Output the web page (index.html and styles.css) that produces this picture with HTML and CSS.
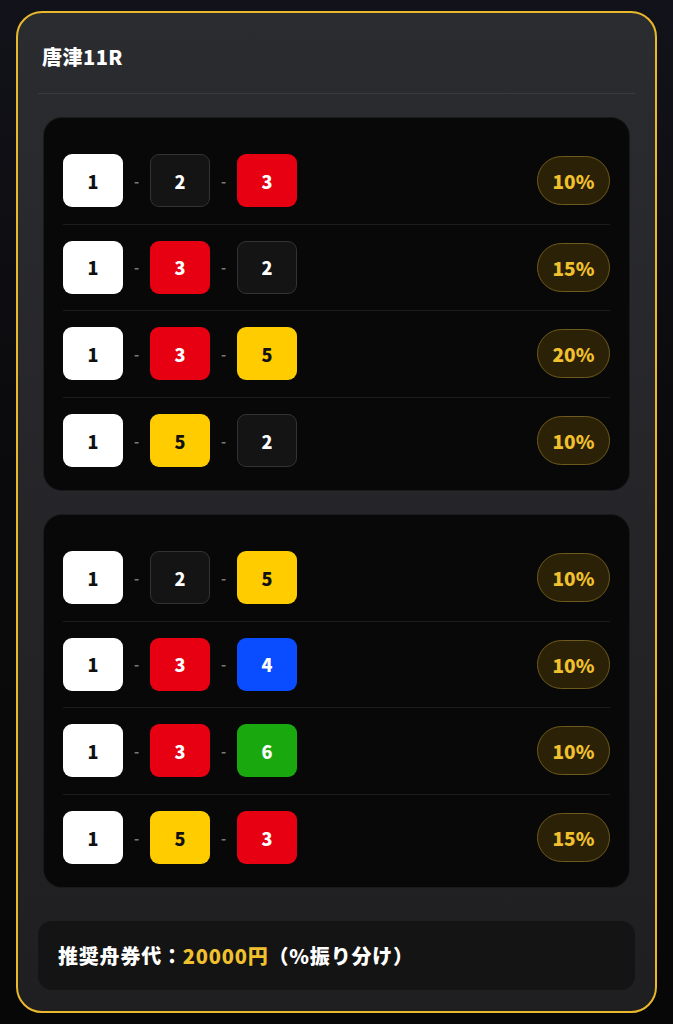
FILE: index.html
```html
<!DOCTYPE html>
<html lang="ja">
<head>
    <meta charset="UTF-8">
    <meta name="viewport" content="width=device-width, initial-scale=1.0">
    <title>唐津11R</title>
    <link rel="stylesheet" href="styles.css">
</head>
<body>
    <div class="card">
        <h2 class="race-title">唐津11R</h2>

        <div class="group">
            <div class="row">
                <div class="combo">
                    <span class="boat b1">1</span><span class="dash">-</span><span class="boat b2">2</span><span class="dash">-</span><span class="boat b3">3</span>
                </div>
                <span class="pct">10%</span>
            </div>
            <div class="row">
                <div class="combo">
                    <span class="boat b1">1</span><span class="dash">-</span><span class="boat b3">3</span><span class="dash">-</span><span class="boat b2">2</span>
                </div>
                <span class="pct">15%</span>
            </div>
            <div class="row">
                <div class="combo">
                    <span class="boat b1">1</span><span class="dash">-</span><span class="boat b3">3</span><span class="dash">-</span><span class="boat b5">5</span>
                </div>
                <span class="pct">20%</span>
            </div>
            <div class="row">
                <div class="combo">
                    <span class="boat b1">1</span><span class="dash">-</span><span class="boat b5">5</span><span class="dash">-</span><span class="boat b2">2</span>
                </div>
                <span class="pct">10%</span>
            </div>
        </div>

        <div class="group">
            <div class="row">
                <div class="combo">
                    <span class="boat b1">1</span><span class="dash">-</span><span class="boat b2">2</span><span class="dash">-</span><span class="boat b5">5</span>
                </div>
                <span class="pct">10%</span>
            </div>
            <div class="row">
                <div class="combo">
                    <span class="boat b1">1</span><span class="dash">-</span><span class="boat b3">3</span><span class="dash">-</span><span class="boat b4">4</span>
                </div>
                <span class="pct">10%</span>
            </div>
            <div class="row">
                <div class="combo">
                    <span class="boat b1">1</span><span class="dash">-</span><span class="boat b3">3</span><span class="dash">-</span><span class="boat b6">6</span>
                </div>
                <span class="pct">10%</span>
            </div>
            <div class="row">
                <div class="combo">
                    <span class="boat b1">1</span><span class="dash">-</span><span class="boat b5">5</span><span class="dash">-</span><span class="boat b3">3</span>
                </div>
                <span class="pct">15%</span>
            </div>
        </div>

        <div class="budget">
            推奨舟券代：<span class="amount">20000円</span>（%振り分け）
        </div>
    </div>
</body>
</html>
```

FILE: styles.css
```css
body {
    font-family: "Noto Sans CJK JP", "Noto Sans", sans-serif;
    background: linear-gradient(180deg, #12121a 0%, #0b0b0d 40%, #070707 100%);
    margin: 0;
    padding: 11px 16px 11px 16px;
    color: #fff;
}
.card {
    border: 2.5px solid #e9b92b;
    border-radius: 26px;
    background: linear-gradient(180deg, #2b2c30 0%, #242427 60%, #1f1f21 100%);
    padding: 0 20px 21px 20px;
}
.race-title {
    margin: 0;
    padding: 31px 0 0 4px;
    height: 49px;
    font-size: 20px;
    font-weight: 900;
    line-height: 26px;
    letter-spacing: 0.5px;
    border-bottom: 1px solid #3a3b3f;
}
.group {
    background-color: #080808;
    margin: 24px 6px 0 6px;
    padding: 20px 19px 6px 19px;
    border-radius: 18px;
    box-shadow: 0 0 0 1px #1a1a1c;
}
.group + .group {
    margin-top: 25px;
}
.row {
    display: flex;
    align-items: center;
    justify-content: space-between;
    height: 86.5px;
    border-bottom: 1px solid #1c1c1e;
    box-sizing: border-box;
}
.row:last-child {
    border-bottom: none;
}
.combo {
    display: flex;
    align-items: center;
}
.boat {
    width: 60px;
    height: 53px;
    border-radius: 9px;
    display: flex;
    align-items: center;
    justify-content: center;
    font-size: 18px;
    font-weight: 900;
    box-sizing: border-box;
}
.dash {
    width: 27px;
    text-align: center;
    color: #7a7a7a;
    font-size: 14px;
    font-weight: 700;
}
.b1 { background-color: #ffffff; color: #111; }
.b2 { background-color: #141414; color: #fff; border: 1px solid #333; }
.b3 { background-color: #e60012; color: #fff; }
.b4 { background-color: #0a4cff; color: #fff; }
.b5 { background-color: #ffcc00; color: #111; }
.b6 { background-color: #19a90f; color: #fff; }
.pct {
    width: 73px;
    height: 49px;
    box-sizing: border-box;
    border-radius: 25px;
    border: 1px solid #6e5a1c;
    background-color: #2a2107;
    color: #f0c02e;
    font-size: 19px;
    font-weight: 900;
    display: flex;
    align-items: center;
    justify-content: center;
}
.budget {
    margin-top: 34px;
    background-color: #141414;
    border-radius: 14px;
    height: 69px;
    padding-left: 20px;
    display: flex;
    align-items: center;
    font-size: 20px;
    font-weight: 900;
    letter-spacing: 0.8px;
}
.amount {
    color: #f0c02e;
}
```
